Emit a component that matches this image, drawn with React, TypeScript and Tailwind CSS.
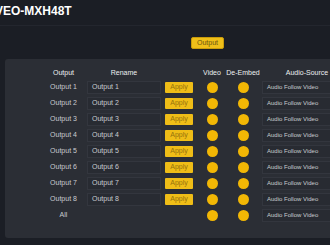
import React from "react";

const outputs = [1, 2, 3, 4, 5, 6, 7, 8];

const Dot = () => <div className="w-[11px] h-[11px] rounded-full bg-[#f2b705]" />;

const Row = ({ label, rename }: { label: string; rename: boolean }) => (
  <div className="flex items-center h-[16px]">
    <div className="w-[47px] text-center text-[7px] text-[#c9cbd0] whitespace-nowrap">{label}</div>
    {rename ? (
      <>
        <div className="w-[74px] h-[13px] flex items-center px-[4px] bg-[#282b32] border border-[#33363e] text-[7px] text-[#c9cbd0]">
          {label}
        </div>
        <div className="ml-[4px] w-[28px] h-[11px] flex items-center justify-center rounded-[1px] bg-[#efbd17] text-[7px] text-[#94720d]">
          Apply
        </div>
      </>
    ) : (
      <div className="w-[106px]" />
    )}
    <div className="w-[38px] flex justify-center">
      <Dot />
    </div>
    <div className="w-[24px] flex justify-center">
      <Dot />
    </div>
    <div className="ml-[7px] w-[90px] h-[13px] flex items-center px-[4px] bg-[#282b32] border border-[#33363e] text-[6px] text-[#c9cbd0] whitespace-nowrap">
      Audio Follow Video
    </div>
  </div>
);

export default function App() {
  return (
    <div className="w-[330px] h-[245px] overflow-hidden bg-[#1b1e25] font-['Liberation_Sans',Arial,sans-serif]">
      <div className="h-[26px] border-b border-[#23262e] pt-[5px]">
        <div className="-ml-[5px] text-[12px] font-semibold text-white leading-[13px]">VEO-MXH48T</div>
      </div>

      <div className="pt-[11px] pl-[191px]">
        <div className="w-[33px] h-[12px] flex items-center justify-center rounded-[2px] bg-[#efbf19] border border-[#c99b0b] text-[7px] text-[#6b5510]">
          Output
        </div>
      </div>

      <div className="mt-[10px] ml-[5px] w-[360px] h-[179px] rounded-[3px] bg-[#2b2e35] pt-[8px] pl-[35px]">
        <div className="flex items-center h-[12px] text-[7px] font-medium text-[#eceef1] whitespace-nowrap">
          <div className="w-[47px] text-center">Output</div>
          <div className="w-[74px] text-center">Rename</div>
          <div className="w-[32px]" />
          <div className="w-[38px] text-center">Video</div>
          <div className="w-[24px] flex justify-center">
            <span>De-Embed</span>
          </div>
          <div className="ml-[7px] w-[90px] text-center">Audio-Source</div>
        </div>
        {outputs.map((n) => (
          <Row key={n} label={`Output ${n}`} rename />
        ))}
        <Row label="All" rename={false} />
      </div>
    </div>
  );
}
